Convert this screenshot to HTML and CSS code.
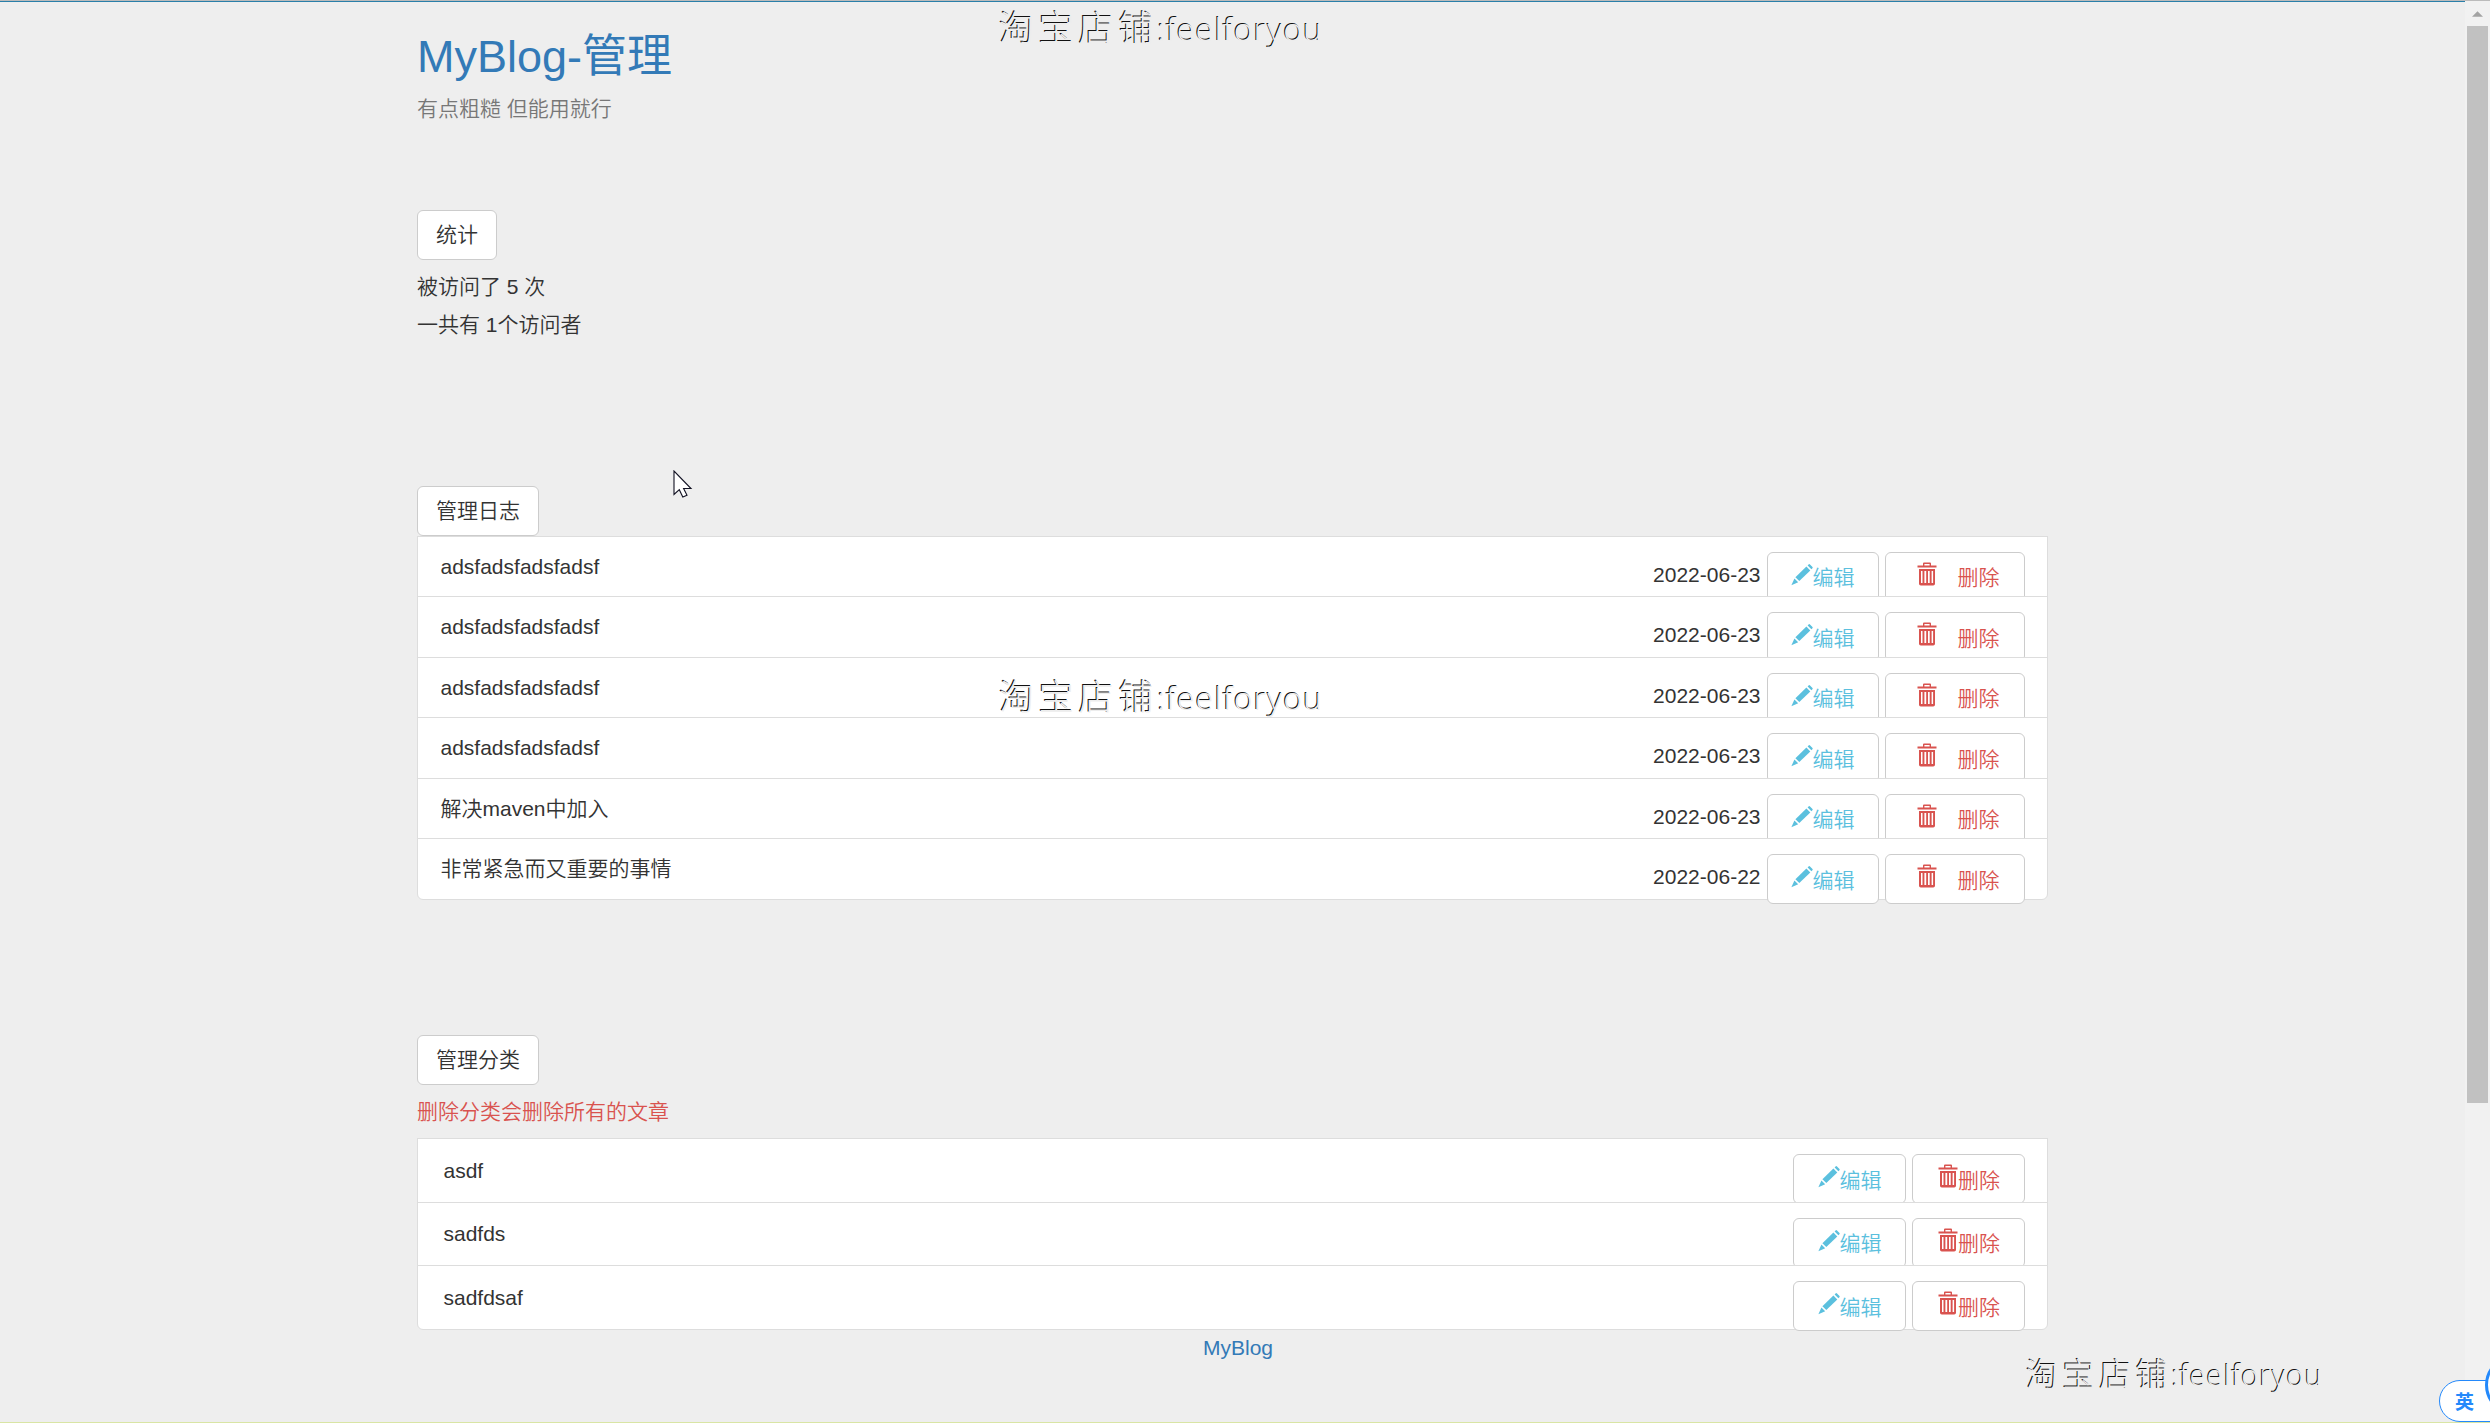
FILE: index.html
```html
<!DOCTYPE html>
<html lang="zh-CN">
<head>
    <meta charset="UTF-8">
    <meta name="viewport" content="width=device-width, initial-scale=1.0">
    <title>MyBlog-管理</title>
    <link rel="stylesheet" href="styles.css">
</head>
<body>
    <svg class="symbols">
        <symbol id="pencil" viewBox="0 0 22 22">
            <path d="M16.6 1.4 L17.8 0.3 Q18.4 -0.2 19 0.4 L21.5 3 Q22 3.6 21.4 4.2 L20.4 5.2 Z"/>
            <path d="M15.4 2.6 L19.3 6.5 L8.3 17.1 L4.4 13.3 Z"/>
            <path d="M3.4 14.5 L7.2 18.2 L0.4 21.3 Z"/>
        </symbol>
        <symbol id="trash" viewBox="0 0 20 24">
            <path d="M0.5 3.6 H6 V1.5 Q6 0.5 7 0.5 H13 Q14 0.5 14 1.5 V3.6 H19.5 V5.4 H0.5 Z M7.4 3.6 H12.6 V1.9 H7.4 Z" fill-rule="evenodd"/>
            <path d="M2 7 H18 V21.7 Q18 23.5 16.2 23.5 H3.8 Q2 23.5 2 21.7 Z M4 9 V21 H5.5 V9 Z M7.4 9 V21 H9.2 V9 Z M11 9 V21 H12.7 V9 Z M14.6 9 V21 H16.1 V9 Z" fill-rule="evenodd"/>
        </symbol>
    </svg>

    <div id="container">
        <header>
            <h2><a href="#">MyBlog-管理</a></h2>
            <p class="sub">有点粗糙 但能用就行</p>
        </header>

        <section class="stat">
            <button type="button" class="btn">统计</button>
            <p>被访问了 5 次</p>
            <p>一共有 1个访问者</p>
        </section>

        <section class="article">
            <button type="button" class="btn">管理日志</button>
            <ul class="list">
                <li>
                    <span class="title">adsfadsfadsfadsf</span>
                    <span class="date">2022-06-23</span>
                    <a href="#" class="btn edit"><svg class="pencil"><use href="#pencil"/></svg>编辑</a>
                    <a href="#" class="btn del"><svg class="trash"><use href="#trash"/></svg>删除</a>
                </li>
                <li>
                    <span class="title">adsfadsfadsfadsf</span>
                    <span class="date">2022-06-23</span>
                    <a href="#" class="btn edit"><svg class="pencil"><use href="#pencil"/></svg>编辑</a>
                    <a href="#" class="btn del"><svg class="trash"><use href="#trash"/></svg>删除</a>
                </li>
                <li>
                    <span class="title">adsfadsfadsfadsf</span>
                    <span class="date">2022-06-23</span>
                    <a href="#" class="btn edit"><svg class="pencil"><use href="#pencil"/></svg>编辑</a>
                    <a href="#" class="btn del"><svg class="trash"><use href="#trash"/></svg>删除</a>
                </li>
                <li>
                    <span class="title">adsfadsfadsfadsf</span>
                    <span class="date">2022-06-23</span>
                    <a href="#" class="btn edit"><svg class="pencil"><use href="#pencil"/></svg>编辑</a>
                    <a href="#" class="btn del"><svg class="trash"><use href="#trash"/></svg>删除</a>
                </li>
                <li>
                    <span class="title">解决maven中加入</span>
                    <span class="date">2022-06-23</span>
                    <a href="#" class="btn edit"><svg class="pencil"><use href="#pencil"/></svg>编辑</a>
                    <a href="#" class="btn del"><svg class="trash"><use href="#trash"/></svg>删除</a>
                </li>
                <li>
                    <span class="title">非常紧急而又重要的事情</span>
                    <span class="date">2022-06-22</span>
                    <a href="#" class="btn edit"><svg class="pencil"><use href="#pencil"/></svg>编辑</a>
                    <a href="#" class="btn del"><svg class="trash"><use href="#trash"/></svg>删除</a>
                </li>
            </ul>
        </section>

        <section class="category">
            <button type="button" class="btn">管理分类</button>
            <p class="warn">删除分类会删除所有的文章</p>
            <ul class="list">
                <li>
                    <span class="title">asdf</span>
                    <a href="#" class="btn edit"><svg class="pencil"><use href="#pencil"/></svg>编辑</a>
                    <a href="#" class="btn del"><svg class="trash"><use href="#trash"/></svg>删除</a>
                </li>
                <li>
                    <span class="title">sadfds</span>
                    <a href="#" class="btn edit"><svg class="pencil"><use href="#pencil"/></svg>编辑</a>
                    <a href="#" class="btn del"><svg class="trash"><use href="#trash"/></svg>删除</a>
                </li>
                <li>
                    <span class="title">sadfdsaf</span>
                    <a href="#" class="btn edit"><svg class="pencil"><use href="#pencil"/></svg>编辑</a>
                    <a href="#" class="btn del"><svg class="trash"><use href="#trash"/></svg>删除</a>
                </li>
            </ul>
        </section>

        <footer><a href="#">MyBlog</a></footer>
    </div>

    <div class="scrollbar">
        <svg class="arrow" viewBox="0 0 12 6"><path d="M6 0 L12 6 H0 Z"/></svg>
        <div class="thumb"></div>
    </div>

    <div class="mark mark-top"><span>淘宝店铺</span>:feelforyou</div>
    <div class="mark mark-mid"><span>淘宝店铺</span>:feelforyou</div>
    <div class="mark mark-bottom"><span>淘宝店铺</span>:feelforyou</div>

    <svg class="cursor" viewBox="0 0 20 28"><path d="M1 1 V24.5 L6.3 19.7 L9.8 27 L14 25.3 L10.6 18.5 H18 Z"/></svg>

    <div class="ime"><span>英</span><i></i></div>
</body>
</html>
```

FILE: styles.css
```css
*{
    box-sizing: border-box;
}
body{
    position: relative;
    margin: 0; height: 1423px; overflow: hidden;
    background: #eee; color: #333;
    border-top: 1px solid #bbb; border-bottom: 1px solid #d9e5a4;
    font-family: "Liberation Sans", "Noto Sans CJK SC", sans-serif;
    font-size: 21px; line-height: 30px; font-weight: 350;
}
a{
    color: #337ab7; text-decoration: none;
}
h2, p, ul{
    margin: 0; padding: 0;
}
ul{
    list-style: none;
}
.symbols{
    display: none;
}
#container{
    width: 1631px; margin-left: 417px;
}
header{
    height: 209px; padding-top: 31px;
}
header::before{
    content: ""; position: absolute; left: 0; right: 0; top: 0;
    height: 1px; background: #2a7fa9;
}
h2{
    font-size: 45px; line-height: 50px; font-weight: 400;
}
.sub{
    margin-top: 12px; color: #777;
}
.btn{
    display: flex; align-items: center;
    height: 50px; padding: 0 18px; border: 1px solid #ccc; border-radius: 6px;
    background: #fff; color: #333;
    font-family: inherit; font-size: 21px; line-height: 30px; font-weight: 350;
}
.stat{
    height: 276px;
}
.stat p{
    margin-top: 12px; height: 26px; line-height: 30px;
}
.article{
    height: 549px;
}
.list li{
    position: relative;
    display: flex; align-items: flex-start;
    height: 61.5px; margin-bottom: -1px; padding: 15px 22.5px 0 22.5px;
    border: 1px solid #ddd; background: #fff;
}
.list li:last-child{
    border-radius: 0 0 6px 6px;
}
.article .list{
    margin-top: -0.1px;
}
.title{
    flex: 1;
}
.date{
    margin: 8px 6px 0 0;
}
.edit{
    width: 112px; margin-right: 6px; padding: 3px 0 0 23px; color: #5bc0de;
}
.del{
    width: 140px; padding: 3px 0 0 31px; color: #d9534f;
}
.pencil{
    width: 22px; height: 22px; margin: -7px 0 0 0; fill: currentColor;
}
.trash{
    width: 20px; height: 24px; margin: -9px 21px 0 0; fill: currentColor;
}
.category .list li{
    height: 64.66px; padding-left: 25.5px;
}
.category .title{
    margin-top: 1.6px;
}
.category .edit{
    width: 113px; padding-left: 24px;
}
.category .del{
    width: 113px; padding-left: 25px;
}
.category .trash{
    margin-right: 0.5px;
}
.warn{
    margin: 12px 0 11px; color: #d9534f;
}
footer{
    padding: 4px 0 0 11px; text-align: center;
}

/* 滚动条 */
.scrollbar{
    position: absolute; top: -1px; right: 0;
    width: 25px; height: 1422px; padding: 11px 2px 0; background: #f1f1f1;
}
.arrow{
    display: block; width: 11px; height: 6px; margin: 0 auto; fill: #a3a3a3;
}
.thumb{
    height: 1077px; margin-top: 9px; background: #c1c1c1;
}

/* 水印 */
.mark{
    position: absolute;
    color: #ededed; text-shadow: -1px -1px 0 #111;
    font-family: "Open Sans", "Noto Sans CJK SC", sans-serif;
    font-size: 32px; line-height: 40px; font-weight: 300; letter-spacing: 1.2px; white-space: nowrap;
}
.mark span{
    margin-right: -1px;
    font-family: "Noto Sans CJK SC", sans-serif;
    font-size: 35px; letter-spacing: 4.8px;
}
.mark-top{
    left: 999px; top: 5px;
}
.mark-mid{
    left: 999px; top: 674px;
}
.mark-bottom{
    left: 2026px; top: 1351px; font-size: 29px;
}
.mark-bottom span{
    font-size: 32px; letter-spacing: 4.6px;
}
.cursor{
    position: absolute; left: 673px; top: 469px;
    width: 20px; height: 28px; fill: #fff; stroke: #112; stroke-width: 1.1;
}

/* 输入法 */
.ime{
    position: absolute; left: 2439px; top: 1379px;
    width: 80px; height: 42px; padding-left: 15px;
    border: 1.5px solid #2489fb; border-radius: 21px; background: #fff;
}
.ime span{
    color: #2489fb; font-size: 19px; line-height: 43px; font-weight: 700;
}
.ime i{
    position: absolute; left: 45px; top: -26px;
    width: 60px; height: 60px; border: 3px solid #2489fb; border-radius: 50%; background: #fff;
}
```
